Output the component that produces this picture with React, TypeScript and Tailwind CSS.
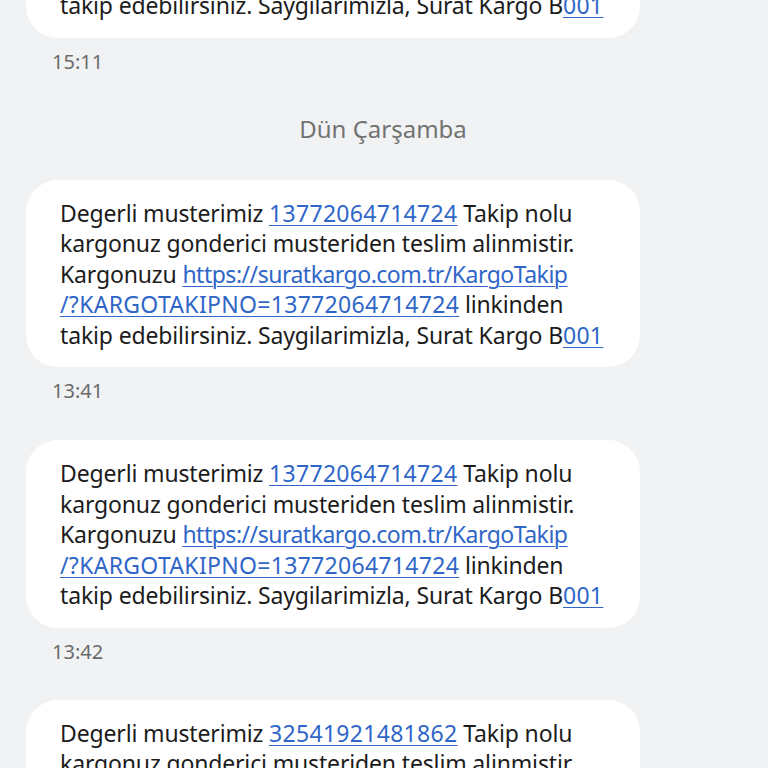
const font = { fontFamily: '"Noto Sans", Inter, sans-serif' };

type Part = { t: string; link?: "num" | "url" };
type Line = Part[];

function message(no: string): Line[] {
  return [
    [{ t: "Degerli musterimiz " }, { t: no, link: "num" }, { t: " Takip nolu" }],
    [{ t: "kargonuz gonderici musteriden teslim alinmistir." }],
    [{ t: "Kargonuzu " }, { t: "https://suratkargo.com.tr/KargoTakip", link: "url" }],
    [{ t: `/?KARGOTAKIPNO=${no}`, link: "num" }, { t: " linkinden" }],
    [{ t: "takip edebilirsiniz. Saygilarimizla, Surat Kargo B" }, { t: "001", link: "num" }],
  ];
}

function Bubble({ no }: { no: string }) {
  return (
    <div className="w-[614px] rounded-[32px] bg-white pl-[34px] pt-[18px] pb-[17px] text-[23px] leading-[30.5px] tracking-[-0.15px] text-[#1c1c1c]">
      {message(no).map((line, i) => (
        <div key={i} className="whitespace-pre">
          {line.map((p, j) =>
            p.link === "url" ? (
              <span key={j} className="tracking-[-0.5px] text-[#2f66c8] underline decoration-1 underline-offset-[3px]">
                {p.t}
              </span>
            ) : p.link === "num" ? (
              <span key={j} className="tracking-[0.3px] text-[#2f66c8] underline decoration-1 underline-offset-[3px]">
                {p.t}
              </span>
            ) : (
              <span key={j}>{p.t}</span>
            )
          )}
        </div>
      ))}
    </div>
  );
}

function Time({ t }: { t: string }) {
  return (
    <div className="ml-[26px] mt-[12px] text-[20px] leading-[24px] text-[#6b6b6b]">{t}</div>
  );
}

export default function App() {
  return (
    <main className="h-screen w-full overflow-hidden bg-[#f1f2f4]" style={font}>
      <div className="-mt-[150px] flex flex-col px-[26px]">
        <Bubble no="13772064714724" />
        <Time t="15:11" />
        <div className="mt-[40px] pr-[2px] text-center text-[24px] leading-[30px] text-[#727272]">
          Dün Çarşamba
        </div>
        <div className="mt-[36px]">
          <Bubble no="13772064714724" />
        </div>
        <Time t="13:41" />
        <div className="mt-[37px]">
          <Bubble no="13772064714724" />
        </div>
        <Time t="13:42" />
        <div className="mt-[36px]">
          <Bubble no="32541921481862" />
        </div>
      </div>
    </main>
  );
}
